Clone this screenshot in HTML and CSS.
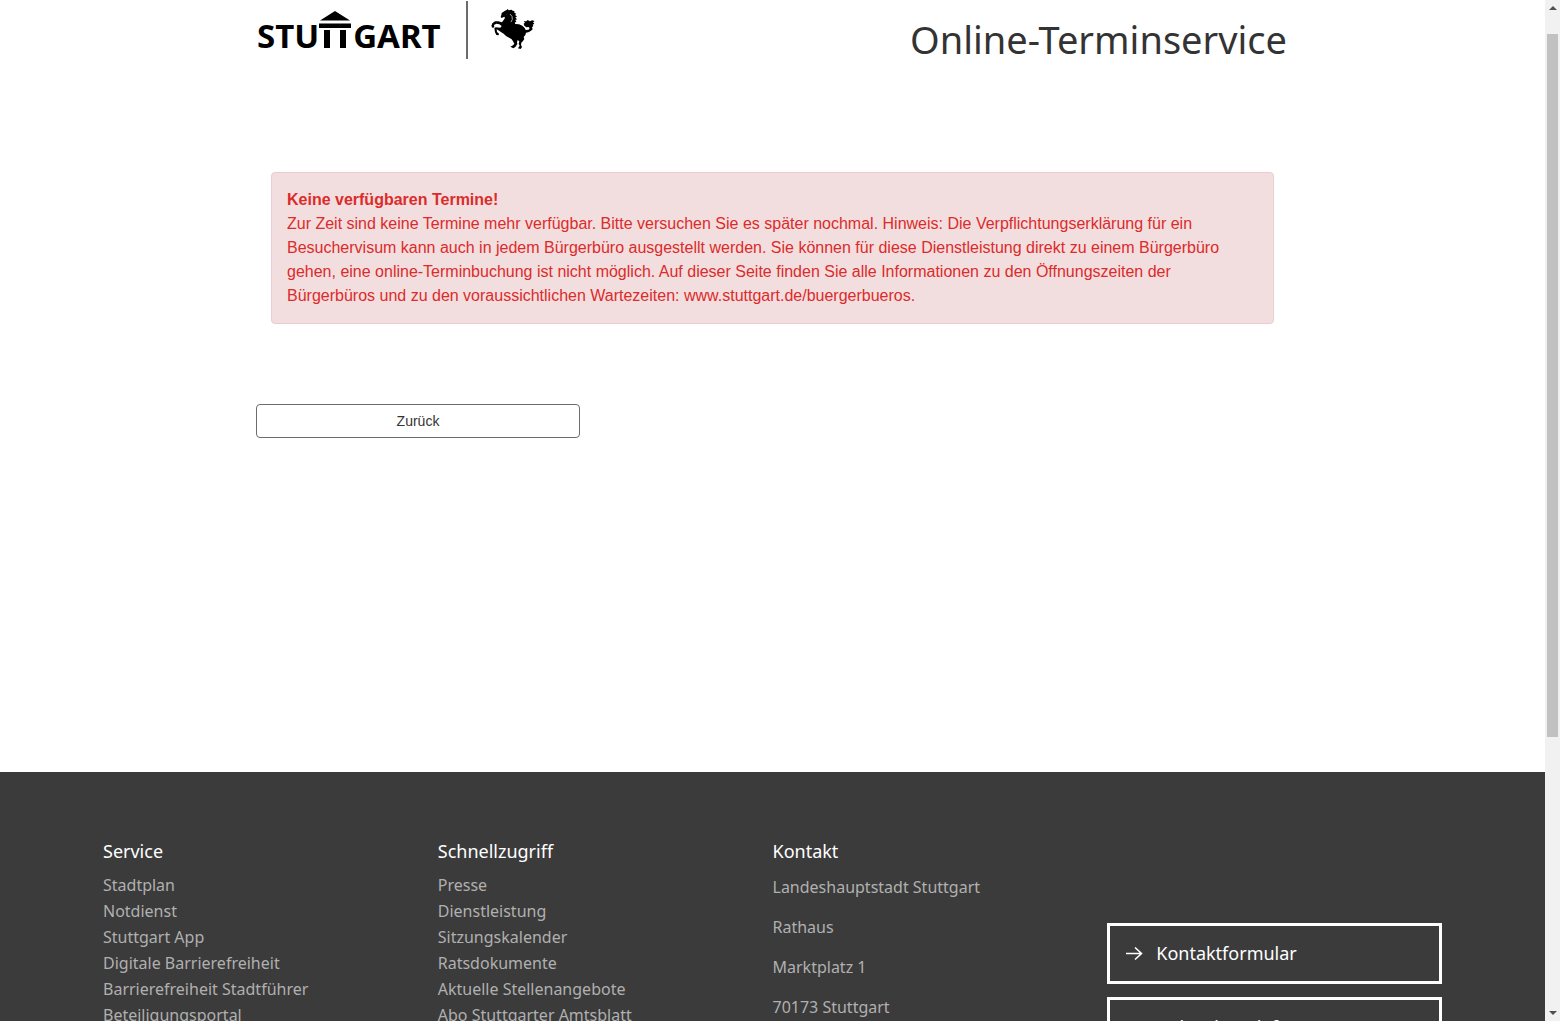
FILE: index.html
```html
<!DOCTYPE html>
<html lang="de">
<head>
<meta charset="utf-8">
<meta name="viewport" content="width=device-width, initial-scale=1">
<title>Online-Terminservice</title>
<link rel="stylesheet" href="styles.css">
</head>
<body>
<div class="page">
  <header class="header container">
    <a class="logo" href="#" aria-label="Stuttgart">
      <span class="wordmark"><span>STU</span><svg class="pavilion" viewBox="0 0 32 38" aria-hidden="true"><path d="M16 0 31 9.500H1ZM0 12.500H32V17H0ZM5 19H11V37H5ZM21 19H27V37H21Z"/></svg><span>GART</span></span>
      <svg class="horse" viewBox="18 16 132 120" aria-hidden="true"><path d="M50 28 60 21 65 19 68 16 71 20 80 18 83 21 89 23 87 26 94 31 90 33 96 39 91 41 96 47 91 49 94 54 89 57 91 61 102 62 112 66 119 73 122 79 131 78 134 73 130 70 124 71 118 66 116 60 120 57 116 53 124 53 128 49 135 53 141 50 149 52 144 56 148 60 143 63 145 67 141 71 143 77 137 82 130 86 123 87 121 94 116 100 118 106 114 112 109 117 108 124 111 130 107 136 99 134 104 126 101 121 103 113 98 109 96 116 97 121 91 130 85 134 76 129 84 125 88 120 84 113 80 107 74 103 64 98 56 90 49 86 39 79 35 77 36 85 42 90 41 95 34 94 30 86 28 74 32 71 46 72 50 67 43 62 34 60 27 64 28 71 23 73 19 67 22 59 30 53 40 53 51 56 56 49 60 43 58 39 50 43 47 40 49 34Z"/><path class="horse-line" d="m75 31 6 7 1 9-4 8"/></svg>
    </a>
    <h1 class="title">Online-Terminservice</h1>
  </header>

  <main class="main container">
    <div class="alert" role="alert">
      <strong>Keine verfügbaren Termine!</strong><br>
      Zur Zeit sind keine Termine mehr verfügbar. Bitte versuchen Sie es später nochmal. Hinweis: Die Verpflichtungserklärung für ein Besuchervisum kann auch in jedem Bürgerbüro ausgestellt werden. Sie können für diese Dienstleistung direkt zu einem Bürgerbüro gehen, eine online-Terminbuchung ist nicht möglich. Auf dieser Seite finden Sie alle Informationen zu den Öffnungszeiten der Bürgerbüros und zu den voraussichtlichen Wartezeiten: www.stuttgart.de/buergerbueros.
    </div>
    <button class="back" type="button">Zurück</button>
  </main>

  <footer class="footer">
    <section>
      <h2>Service</h2>
      <ul class="links">
        <li><a href="#">Stadtplan</a></li>
        <li><a href="#">Notdienst</a></li>
        <li><a href="#">Stuttgart App</a></li>
        <li><a href="#">Digitale Barrierefreiheit</a></li>
        <li><a href="#">Barrierefreiheit Stadtführer</a></li>
        <li><a href="#">Beteiligungsportal</a></li>
      </ul>
    </section>
    <section>
      <h2>Schnellzugriff</h2>
      <ul class="links">
        <li><a href="#">Presse</a></li>
        <li><a href="#">Dienstleistung</a></li>
        <li><a href="#">Sitzungskalender</a></li>
        <li><a href="#">Ratsdokumente</a></li>
        <li><a href="#">Aktuelle Stellenangebote</a></li>
        <li><a href="#">Abo Stuttgarter Amtsblatt</a></li>
      </ul>
    </section>
    <section>
      <h2>Kontakt</h2>
      <address class="contact">
        <p>Landeshauptstadt Stuttgart</p>
        <p>Rathaus</p>
        <p>Marktplatz 1</p>
        <p>70173 Stuttgart</p>
      </address>
    </section>
    <nav class="actions" aria-label="Kontakt">
      <a class="action" href="#"><svg viewBox="0 0 18 14" aria-hidden="true"><path d="M1 7.500H16.500M10 1.500 16.500 7.500 10 13.500"/></svg>Kontaktformular</a>
      <a class="action" href="#"><svg viewBox="0 0 18 14" aria-hidden="true"><path d="M1 7.500H16.500M10 1.500 16.500 7.500 10 13.500"/></svg>Gebärdentelefon</a>
    </nav>
  </footer>
</div>
<div class="scrollbar" aria-hidden="true">
  <svg viewBox="0 0 8 4"><path d="M4 0 8 4H0Z"/></svg>
  <div class="track"><div class="thumb"></div></div>
  <svg viewBox="0 0 8 4"><path d="M0 0H8L4 4Z"/></svg>
</div>
</body>
</html>
```
FILE: styles.css
```css
* { box-sizing: border-box; }

body {
  display: flex;
  height: 100vh;
  margin: 0;
  overflow: hidden;
  background: #fff;
  color: #333;
  font: 16px/24px "Liberation Sans", Arial, sans-serif;
}

h1, h2, p, ul { margin: 0; padding: 0; }
a { color: inherit; text-decoration: none; }

.page {
  display: flex;
  flex: 1;
  flex-direction: column;
  min-width: 0;
}

.container {
  width: 100%;
  max-width: 1033px;
  margin: 0 auto;
}

.header {
  display: flex;
  justify-content: space-between;
  padding: 1px 2px 0 1px;
}

.logo {
  display: flex;
  height: 58px;
  color: #000;
}

.wordmark {
  display: flex;
  width: 211px;
  padding-top: 10px;
  border-right: 2px solid #6b6b6b;
  font: bold 33px/50px "Noto Sans", "Open Sans", sans-serif;
}

.pavilion {
  width: 32px;
  height: 38px;
  margin-right: 2px;
}

.horse {
  width: 44px;
  height: 40px;
  margin: 8px 0 0 23px;
}

.horse-line {
  fill: none;
  stroke: #fff;
  stroke-width: 2;
}

.title {
  padding-top: 14px;
  font: 400 38px/48px "Noto Sans", "Open Sans", sans-serif;
}

.main {
  flex: 1;
  padding-top: 109px;
}

.alert {
  margin: 0 15px 80px;
  padding: 15px;
  border: 1px solid #ebccd1;
  border-radius: 4px;
  background: #f2dede;
  color: #dc2b2b;
}

.back {
  display: block;
  width: 324px;
  height: 34px;
  border: 1px solid #6c6c6c;
  border-radius: 4px;
  background: #fff;
  color: #333;
  font: 14px/20px "Liberation Sans", Arial, sans-serif;
}

.footer {
  display: grid;
  grid-template-columns: repeat(4, 1fr);
  height: 249px;
  padding: 66px 103px 0;
  overflow: hidden;
  background: #3b3b3b;
  color: #b0b0b0;
  font: 16px/26px "Noto Sans", "Open Sans", sans-serif;
}

.footer h2 {
  margin-bottom: 8px;
  color: #fff;
  font-size: 18px;
  font-weight: 400;
  line-height: 26px;
}

.links { list-style: none; }

.contact { font-style: normal; }

.contact p {
  padding-top: 2px;
  margin-bottom: 12px;
}

.actions {
  display: flex;
  flex-direction: column;
  gap: 13px;
  padding-top: 85px;
}

.action {
  display: flex;
  flex: none;
  align-items: center;
  gap: 13px;
  height: 61px;
  padding: 0 15px 1px;
  border: 3px solid #fff;
  color: #fff;
  font-size: 18px;
}

.action svg {
  width: 18px;
  height: 14px;
  overflow: visible;
  fill: none;
  stroke: currentColor;
  stroke-width: 1.6;
}

.scrollbar {
  display: flex;
  flex-direction: column;
  align-items: center;
  width: 15px;
  padding: 6px 0;
  background: #f1f1f1;
}

.scrollbar svg {
  width: 8px;
  height: 4px;
  fill: #505050;
}

.track {
  flex: 1;
  width: 11px;
  padding-top: 24px;
}

.thumb {
  height: 72%;
  background: #c1c1c1;
}
```
